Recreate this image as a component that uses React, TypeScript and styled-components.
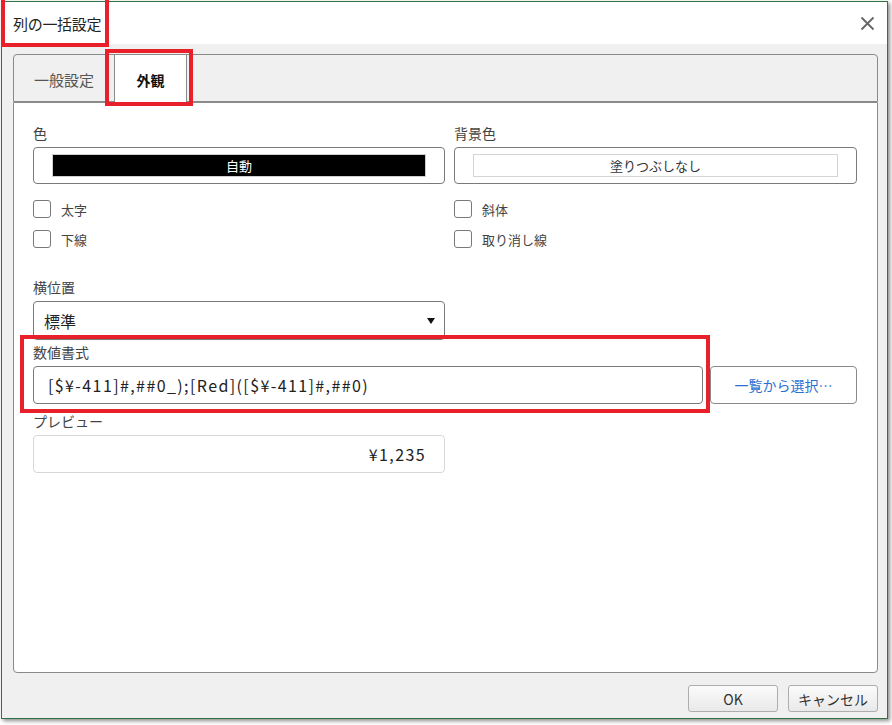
import React from 'react';
import styled, { createGlobalStyle } from 'styled-components';

const GlobalStyle = createGlobalStyle`
  html, body {
    margin: 0;
    padding: 0;
    background: #ffffff;
  }
  body {
    font-family: "Noto Sans CJK JP", "Noto Sans", sans-serif;
    color: #333;
  }
`;

const Page = styled.div`
  width: 892px;
  height: 725px;
  padding: 1px 0 0 1px;
  box-sizing: border-box;
`;

const Dialog = styled.div`
  position: relative;
  width: 887px;
  height: 718px;
  box-sizing: border-box;
  border: 1px solid #2f7346;
  background: #f0f0f0;
  box-shadow: 2px 2px 4px rgba(0, 0, 0, 0.45);
  display: flex;
  flex-direction: column;
`;

const TitleBar = styled.div`
  height: 42px;
  background: #fff;
  display: flex;
  align-items: center;
  justify-content: space-between;
  padding: 0 10px 0 11px;
  flex-shrink: 0;
`;

const Title = styled.div`
  position: relative;
  font-size: 15px;
  color: #222;
  letter-spacing: -0.3px;
`;

const Highlight = styled.div<{ $inset: string }>`
  position: absolute;
  inset: ${(p) => p.$inset};
  border: 4px solid #e8202a;
  pointer-events: none;
  z-index: 5;
`;

const CloseButton = styled.button`
  width: 20px;
  height: 20px;
  border: none;
  background: none;
  padding: 0;
  display: flex;
  align-items: center;
  justify-content: center;
`;

const Body = styled.div`
  flex: 1;
  display: flex;
  flex-direction: column;
  padding: 10px 9px 6px 11px;
`;

const TabBox = styled.div`
  flex: 1;
  display: flex;
  flex-direction: column;
`;

const TabStrip = styled.div`
  height: 46px;
  display: flex;
  border: 1px solid #8a8a8a;
  border-radius: 4px 4px 0 0;
  background: #f0f0f0;
`;

const Tab = styled.div<{ $active?: boolean }>`
  position: relative;
  width: ${(p) => (p.$active ? '71px' : '100px')};
  display: flex;
  align-items: center;
  justify-content: center;
  font-size: ${(p) => (p.$active ? '14px' : '15px')};
  color: ${(p) => (p.$active ? '#111' : '#555')};
  font-weight: ${(p) => (p.$active ? 700 : 400)};
  background: ${(p) => (p.$active ? '#fff' : 'transparent')};
  border-left: ${(p) => (p.$active ? '1px solid #8a8a8a' : 'none')};
  border-right: ${(p) => (p.$active ? '1px solid #8a8a8a' : 'none')};
  margin-bottom: ${(p) => (p.$active ? '-1px' : '0')};
  padding-top: 2px;
`;

const Panel = styled.div`
  flex: 1;
  background: #fff;
  border: 1px solid #8a8a8a;
  border-radius: 0 0 4px 4px;
  padding: 21px 19px 0 19px;
  display: grid;
  grid-template-columns: 412px 403px;
  column-gap: 9px;
  align-content: start;
`;

const Field = styled.div<{ $span?: boolean; $mt?: number }>`
  grid-column: ${(p) => (p.$span ? '1 / span 2' : 'auto')};
  margin-top: ${(p) => p.$mt ?? 0}px;
  display: flex;
  flex-direction: column;
  position: relative;
`;

const Label = styled.div`
  font-size: 14px;
  line-height: 18px;
  height: 18px;
  color: #444;
  margin-bottom: 5px;
`;

const ColorBox = styled.div`
  height: 37px;
  box-sizing: border-box;
  border: 1px solid #7a7a7a;
  border-radius: 4px;
  padding: 6px 18px;
  display: flex;
`;

const Swatch = styled.div<{ $dark?: boolean }>`
  flex: 1;
  display: flex;
  align-items: center;
  justify-content: center;
  font-size: 13px;
  background: ${(p) => (p.$dark ? '#000' : '#fff')};
  color: ${(p) => (p.$dark ? '#fff' : '#333')};
  border: 1px solid ${(p) => (p.$dark ? '#cfcfcf' : '#d4d4d4')};
`;

const CheckList = styled.div`
  display: flex;
  flex-direction: column;
  gap: 12px;
  margin-top: 16px;
`;

const CheckRow = styled.label`
  display: flex;
  align-items: center;
  gap: 10px;
  font-size: 13px;
  color: #444;
  height: 18px;
`;

const CheckBox = styled.span`
  width: 18px;
  height: 18px;
  box-sizing: border-box;
  border: 1px solid #7a7a7a;
  border-radius: 3px;
  background: #fff;
`;

const SelectBox = styled.div`
  height: 39px;
  box-sizing: border-box;
  border: 1px solid #7a7a7a;
  border-radius: 4px;
  display: flex;
  align-items: center;
  justify-content: space-between;
  padding: 0 9px 0 10px;
  font-size: 16px;
  color: #222;
`;

const Arrow = styled.span`
  width: 0;
  height: 0;
  border-left: 4px solid transparent;
  border-right: 4px solid transparent;
  border-top: 6px solid #111;
`;

const FormatRow = styled.div`
  display: flex;
  gap: 7px;
`;

const TextInput = styled.div<{ $align?: 'left' | 'right'; $soft?: boolean; $w?: number }>`
  width: ${(p) => p.$w ?? 412}px;
  height: 38px;
  box-sizing: border-box;
  border: 1px solid ${(p) => (p.$soft ? '#d8d8d8' : '#7a7a7a')};
  border-radius: 4px;
  display: flex;
  align-items: center;
  justify-content: ${(p) => (p.$align === 'right' ? 'flex-end' : 'flex-start')};
  padding: ${(p) => (p.$align === 'right' ? '0 18px 0 0' : '0 0 0 14px')};
  font-size: 16px;
  letter-spacing: 1.4px;
  color: #222;
  background: #fff;
`;

const PickButton = styled.button`
  width: 147px;
  height: 38px;
  box-sizing: border-box;
  border: 1px solid #8a8a8a;
  border-radius: 4px;
  background: #fff;
  color: #2b6fd4;
  font-family: inherit;
  font-size: 14px;
`;

const Footer = styled.div`
  height: 39px;
  box-sizing: border-box;
  padding-top: 12px;
  display: flex;
  justify-content: flex-end;
  align-items: flex-start;
  gap: 10px;
`;

const DialogButton = styled.button`
  width: 90px;
  height: 27px;
  box-sizing: border-box;
  border: 1px solid #adadad;
  border-radius: 3px;
  background: linear-gradient(#fbfbfb, #e9e9e9);
  font-family: inherit;
  font-size: 14px;
  color: #333;
  padding: 0;
`;

function CloseIcon() {
  return (
    <svg width="15" height="15" viewBox="0 0 15 15">
      <path d="M1.5 1.5 L13.5 13.5 M13.5 1.5 L1.5 13.5" stroke="#666" strokeWidth="1.8" />
    </svg>
  );
}

export default function App() {
  return (
    <Page>
      <GlobalStyle />
      <Dialog>
        <TitleBar>
          <Title>
            列の一括設定
            <Highlight $inset="-21px -8px -13px -12px" />
          </Title>
          <CloseButton>
            <CloseIcon />
          </CloseButton>
        </TitleBar>
        <Body>
          <TabBox>
            <TabStrip>
              <Tab>一般設定</Tab>
              <Tab $active>
                外観
                <Highlight $inset="-6px -7px -4px -10px" />
              </Tab>
            </TabStrip>
            <Panel>
              <Field>
                <Label>色</Label>
                <ColorBox>
                  <Swatch $dark>自動</Swatch>
                </ColorBox>
                <CheckList>
                  <CheckRow>
                    <CheckBox />
                    太字
                  </CheckRow>
                  <CheckRow>
                    <CheckBox />
                    下線
                  </CheckRow>
                </CheckList>
              </Field>
              <Field>
                <Label>背景色</Label>
                <ColorBox>
                  <Swatch>塗りつぶしなし</Swatch>
                </ColorBox>
                <CheckList>
                  <CheckRow>
                    <CheckBox />
                    斜体
                  </CheckRow>
                  <CheckRow>
                    <CheckBox />
                    取り消し線
                  </CheckRow>
                </CheckList>
              </Field>
              <Field $mt={30}>
                <Label>横位置</Label>
                <SelectBox>
                  標準
                  <Arrow />
                </SelectBox>
              </Field>
              <div />
              <Field $span $mt={3}>
                <Label>数値書式</Label>
                <FormatRow>
                  <TextInput $w={670}>[$¥-411]#,##0_);[Red]([$¥-411]#,##0)</TextInput>
                  <PickButton>一覧から選択…</PickButton>
                </FormatRow>
                <Highlight $inset="-8px 147px -9px -13px" />
              </Field>
              <Field $mt={8}>
                <Label>プレビュー</Label>
                <TextInput $align="right" $soft>
                  ¥1,235
                </TextInput>
              </Field>
            </Panel>
          </TabBox>
          <Footer>
            <DialogButton>OK</DialogButton>
            <DialogButton>キャンセル</DialogButton>
          </Footer>
        </Body>
      </Dialog>
    </Page>
  );
}
